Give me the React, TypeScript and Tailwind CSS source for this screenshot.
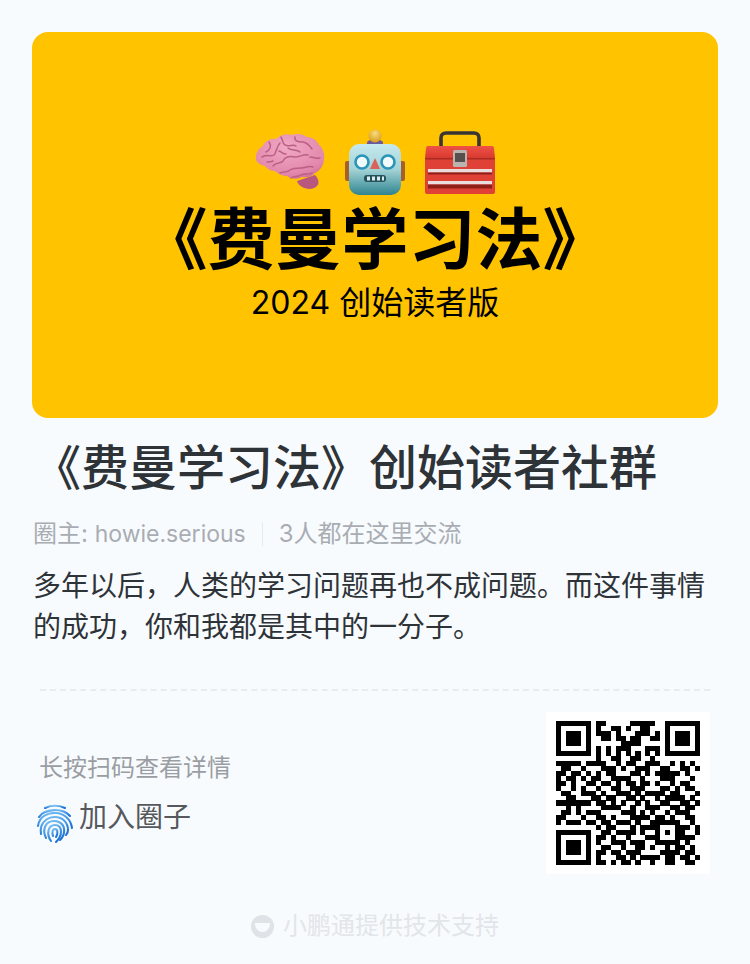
const cjk = 'Inter, "Noto Sans CJK SC", "Noto Sans", sans-serif';

const qrRows = [
  '11111110110000011111001111111',
  '10000010100110100110001000001',
  '10111010111010001110101011101',
  '10111010011011011001101011101',
  '10111010000001111000001011101',
  '10000010101011100011101000001',
  '11111110101010101010101111111',
  '00000000100110011001000000000',
  '11111011110010110011100101010',
  '01100100011101001110011001101',
  '11011010101100011010111110100',
  '10110101100111100100011100010',
  '11010011011010110110100101100',
  '10010100100110011100011010110',
  '01100111010011101011110110001',
  '00110001101100110100101111010',
  '11111110110101001010011001101',
  '00101000011110010011100110110',
  '01101011100001110101001011100',
  '11000100110100011110110100110',
  '10111011011011101001111110010',
  '00000000101100010111100011101',
  '11111110011011110100101011001',
  '10000010110100100011100011110',
  '10111010100111011100111110100',
  '10111010011001001101001011010',
  '10111010110110111000011110110',
  '10000010100011010111101101101',
  '11111110110101101001001100110',
];

function QrCode() {
  return (
    <svg width="144" height="144" viewBox="0 0 29 29" shapeRendering="crispEdges">
      {qrRows.map((row, y) =>
        row.split('').map((c, x) => (c === '1' ? <rect key={`${x}-${y}`} x={x} y={y} width="1.02" height="1.02" fill="#000" /> : null)),
      )}
    </svg>
  );
}

function Brain() {
  return (
    <svg width="70" height="58" viewBox="0 0 70 58">
      <defs>
        <radialGradient id="brainFill" cx="0.45" cy="0.3" r="0.85">
          <stop offset="0" stopColor="#f0a9c4" />
          <stop offset="0.7" stopColor="#e287ab" />
          <stop offset="1" stopColor="#c25e88" />
        </radialGradient>
      </defs>
      <path d="M42 48c2 7 14 11 20 5 3-3 1-8-2-11z" fill="#b9587f" />
      <path d="M1 27C0 20 4 15 8 13c2-5 8-8 13-7 4-4 10-6 16-4 5-2 11-1 15 2 5 0 10 3 12 8 4 3 6 9 5 14 0 6-4 12-9 14-3 4-9 5-13 4-5 3-11 2-15-1-4 0-9-2-12-5-4 0-8-2-10-5-5-1-8-4-9-6z" fill="url(#brainFill)" />
      <g fill="none" stroke="#bb5f86" strokeWidth="1.5" strokeLinecap="round">
        <path d="M14 9c3 4 1 8-3 10M7 24c5-3 9 0 12-2 3-3 2-8 6-12M26 4c2 3 1 6 4 8 4 2 8-1 11 1" />
        <path d="M40 4c-1 4 3 5 8 5 5 1 7 4 9 7M18 33c3-4 8-2 10-5 2-4 7-5 12-4 5 0 8-3 13-2" />
        <path d="M25 40c4-2 7 0 10-3 3-2 7-2 11-2 4 0 8-3 12-1M36 45c3-2 7-1 10-3 4-2 8 0 11-2" />
        <path d="M33 15c3 3 9 1 12 4M55 24c4 0 7 2 10 1M12 29c2 0 4 0 6-1M24 18c3 1 4 3 7 3" />
      </g>
    </svg>
  );
}

function Robot() {
  return (
    <svg width="60" height="66" viewBox="0 0 60 66">
      <defs>
        <linearGradient id="robotHead" x1="0" y1="0" x2="0" y2="1">
          <stop offset="0" stopColor="#c6e9ee" />
          <stop offset="0.5" stopColor="#a3d3d6" />
          <stop offset="1" stopColor="#2f8490" />
        </linearGradient>
        <radialGradient id="robotBall" cx="0.5" cy="0.3" r="0.7">
          <stop offset="0" stopColor="#f8dd7a" />
          <stop offset="1" stopColor="#d99a22" />
        </radialGradient>
      </defs>
      <path d="M22 14c0-5 16-5 16 0v4H22z" fill="#6a5a9c" />
      <circle cx="30" cy="7" r="6.5" fill="url(#robotBall)" />
      <rect x="0" y="32" width="6" height="20" rx="2" fill="#a5602a" />
      <rect x="54" y="32" width="6" height="20" rx="2" fill="#a5602a" />
      <rect x="4" y="15" width="52" height="51" rx="10" fill="url(#robotHead)" />
      <circle cx="17" cy="33" r="6.5" fill="#f2fbfc" stroke="#2a95b8" strokeWidth="2.6" />
      <circle cx="43" cy="33" r="6.5" fill="#f2fbfc" stroke="#2a95b8" strokeWidth="2.6" />
      <path d="M30 29l5 11H25z" fill="#d8635c" />
      <rect x="19" y="46" width="22" height="7" rx="3" fill="#24535c" />
      <path d="M22 47.5h3v4h-3zM27 47.5h3v4h-3zM32 47.5h3v4h-3zM37 47.5h2v4h-2z" fill="#dcecee" />
    </svg>
  );
}

function Toolbox() {
  return (
    <svg width="70" height="65" viewBox="0 0 70 65">
      <defs>
        <linearGradient id="boxLid" x1="0" y1="0" x2="0" y2="1">
          <stop offset="0" stopColor="#ee5245" />
          <stop offset="1" stopColor="#d93a30" />
        </linearGradient>
      </defs>
      <path d="M16 17V9c0-3 2-5 5-5h28c3 0 5 2 5 5v8" fill="none" stroke="#3a3434" strokeWidth="3.6" />
      <path d="M3 17h64c1 0 2 1 2 2l1 10H0l1-10c0-1 1-2 2-2z" fill="url(#boxLid)" />
      <rect x="0" y="29" width="70" height="36" rx="2" fill="#e04136" />
      <rect x="0" y="29" width="70" height="1.5" fill="#a82a22" />
      <rect x="3" y="40" width="64" height="3.5" fill="#eadcdc" />
      <rect x="3" y="43.5" width="64" height="2" fill="#8f2019" />
      <rect x="3" y="52" width="64" height="3.5" fill="#eadcdc" />
      <rect x="3" y="55.5" width="64" height="4" fill="#8f2019" />
      <rect x="28" y="21" width="14" height="17" rx="1.5" fill="#b9b4b0" />
      <rect x="30" y="24" width="10" height="9" fill="#55504e" />
    </svg>
  );
}

function FingerprintMark() {
  return (
    <svg width="38" height="40" viewBox="0 0 38 40" fill="none" strokeLinecap="round" strokeWidth="2.1">
      <defs>
        <linearGradient id="fingerBlue" x1="0" y1="0" x2="0.4" y2="1">
          <stop offset="0" stopColor="#7dc4f5" />
          <stop offset="1" stopColor="#1f74d6" />
        </linearGradient>
      </defs>
      <g stroke="url(#fingerBlue)">
        <path d="M9 4c6-3 14-3 20 0" />
        <path d="M3 13C8 5 26 3 34 12" />
        <path d="M2 22C3 12 13 8 21 9c8 1 14 7 15 15" />
        <path d="M5 30C3 19 11 13 19 13c8 0 13 6 13 13 0 2-1 4-2 5" />
        <path d="M10 34C6 26 9 17 18 17c7 0 11 5 10 11 0 3-2 6-4 8" />
        <path d="M15 37C10 30 12 21 19 21c5 0 6 4 6 7 0 4-2 7-5 10" />
        <path d="M20 33c2-3 2-8-1-8-3 0-3 4-2 7" />
      </g>
    </svg>
  );
}

function FooterMark() {
  return (
    <div className="w-[23px] h-[23px] rounded-full bg-[#dfe2e6] flex items-center justify-center overflow-hidden">
      <div className="w-[15px] h-[9px] mt-[2px] rounded-b-full bg-[#f8fbfe]" />
    </div>
  );
}

export default function App() {
  return (
    <div className="w-[750px] h-[964px] bg-[#f8fbfe] overflow-hidden" style={{ fontFamily: cjk }}>
      <div className="pt-[32px] px-[32px]">
        <div className="w-[686px] h-[386px] rounded-[16px] bg-[#ffc300] flex flex-col items-center pt-[96px]">
          <div className="flex items-center gap-[20px] h-[67px]">
            <Brain />
            <Robot />
            <Toolbox />
          </div>
          <div className="mt-[5px] h-[80px] leading-[80px] text-[67px] font-bold text-black whitespace-nowrap">《费曼学习法》</div>
          <div className="mt-[1px] h-[44px] leading-[44px] text-[32px] text-black">2024 创始读者版</div>
        </div>
      </div>

      <div className="mt-[20px] pl-[33px] h-[60px] leading-[60px] text-[48px] font-medium text-[#2e3338] whitespace-nowrap">
        《费曼学习法》创始读者社群
      </div>

      <div className="mt-[19px] pl-[33px] h-[34px] flex items-center text-[24px] text-[#a9adb3]">
        <span>圈主: <span className="text-[23px]">howie.serious</span></span>
        <span className="mx-[16px] w-px h-[24px] bg-[#e6e9ed]" />
        <span>3人都在这里交流</span>
      </div>

      <p className="mt-[15px] mx-[33px] w-[686px] text-[28px] leading-[41px] text-[#2e3338]">
        多年以后，人类的学习问题再也不成问题。而这件事情的成功，你和我都是其中的一分子。
      </p>

      <div className="mt-[41px] mx-[40px] border-t-2 border-dashed border-[#e8ecf1]" />

      <div className="mt-[21px] flex justify-between pl-[36px] pr-[40px]">
        <div className="pt-[39px]">
          <div className="pl-[3px] h-[34px] leading-[34px] text-[24px] text-[#9a9ea3]">长按扫码查看详情</div>
          <div className="mt-[12px] flex items-start">
            <div className="mt-[7px]">
              <FingerprintMark />
            </div>
            <span className="ml-[5px] h-[40px] leading-[40px] text-[28px] text-[#55585c]">加入圈子</span>
          </div>
        </div>
        <div className="w-[164px] h-[162px] bg-white flex items-center justify-center">
          <QrCode />
        </div>
      </div>

      <div className="mt-[40px] pl-[251px] flex items-center h-[24px]">
        <FooterMark />
        <span className="ml-[9px] text-[24px] text-[#e2e5e9]">小鹏通提供技术支持</span>
      </div>
    </div>
  );
}
